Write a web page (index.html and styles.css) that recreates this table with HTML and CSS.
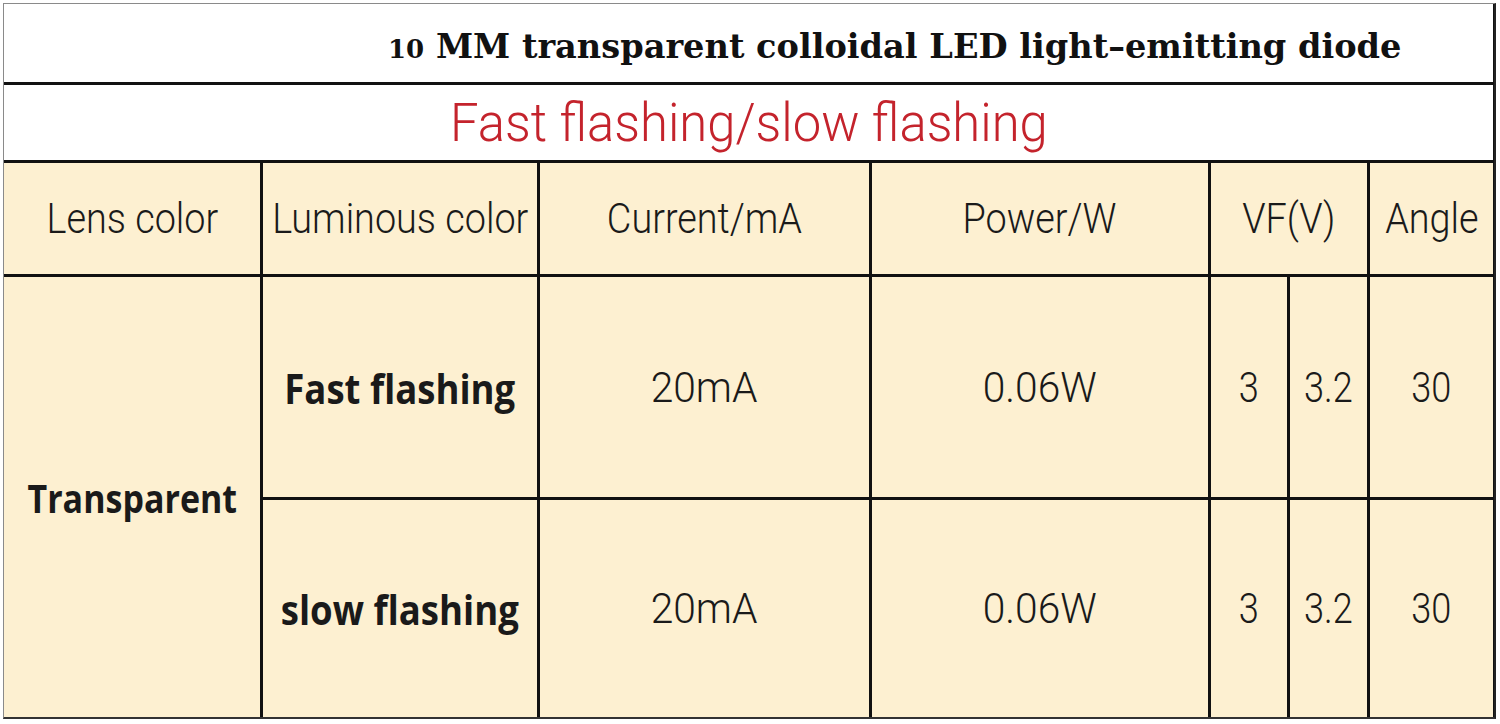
FILE: index.html
```html
<!DOCTYPE html>
<html lang="en">
<head>
  <meta charset="UTF-8">
  <title>10MM LED</title>
  <link rel="stylesheet" href="styles.css">
</head>
<body>
  <div class="sheet">
    <div class="title"><span><span class="num">10</span> MM transparent colloidal LED light–emitting diode</span></div>
    <div class="subtitle"><span class="squeeze">Fast flashing/slow flashing</span></div>

    <!-- header -->
    <div class="cell head"><span class="squeeze">Lens color</span></div>
    <div class="cell head"><span class="squeeze">Luminous color</span></div>
    <div class="cell head"><span class="squeeze">Current/mA</span></div>
    <div class="cell head"><span class="squeeze">Power/W</span></div>
    <div class="cell head vf"><span class="squeeze">VF(V)</span></div>
    <div class="cell head"><span class="squeeze">Angle</span></div>

    <!-- rows -->
    <div class="cell lens"><span class="squeeze">Transparent</span></div>
    <div class="cell bold"><span class="squeeze">Fast flashing</span></div>
    <div class="cell wide"><span class="squeeze">20mA</span></div>
    <div class="cell wide"><span class="squeeze">0.06W</span></div>
    <div class="cell"><span class="squeeze">3</span></div>
    <div class="cell"><span class="squeeze">3.2</span></div>
    <div class="cell"><span class="squeeze">30</span></div>

    <div class="cell bold"><span class="squeeze">slow flashing</span></div>
    <div class="cell wide"><span class="squeeze">20mA</span></div>
    <div class="cell wide"><span class="squeeze">0.06W</span></div>
    <div class="cell"><span class="squeeze">3</span></div>
    <div class="cell"><span class="squeeze">3.2</span></div>
    <div class="cell"><span class="squeeze">30</span></div>
  </div>
</body>
</html>
```

FILE: styles.css
```css
/* spec sheet table */
body {
  margin: 0;
  padding: 3px;
  background-color: #ffffff;
  font-family: Roboto, "Liberation Sans", sans-serif;
  color: #1a1a1a;
}
.sheet {
  display: grid;
  grid-template-columns: 256px 274px 329px 336px 76px 77px 123px;
  grid-template-rows: 78px 75px 111px 220px 217px;
  gap: 3px;
  width: 1490px;
  background-color: #111;
  border-left: 1px solid #8a8a8a;
  border-top: 1px solid #8a8a8a;
  border-right: 2px solid #222;
  border-bottom: 2px solid #333;
}
.title {
  grid-column: 1 / -1;
  background-color: #fff;
  display: flex;
  align-items: center;
  padding-left: 384px;
  padding-top: 5px;
  font-family: "DejaVu Serif", "Liberation Serif", serif;
  font-weight: bold;
  font-size: 33.6px;
  color: #111;
  white-space: nowrap;
}
.title .num {
  font-size: 26px;
}
.subtitle {
  grid-column: 1 / -1;
  background-color: #fff;
  display: flex;
  align-items: center;
  justify-content: center;
  font-size: 54px;
  font-weight: 300;
  color: #c4232c;
}
.subtitle .squeeze {
  transform: scaleX(0.94);
}
.cell {
  background-color: #fdf0d1;
  display: flex;
  align-items: center;
  justify-content: center;
  font-size: 42px;
  font-weight: 300;
}
.head .squeeze {
  transform: scaleX(0.9);
}
.vf {
  grid-column: span 2;
}
.wide .squeeze {
  transform: scaleX(0.97);
}
.lens {
  grid-row: span 2;
  font-family: "Open Sans", "Noto Sans", sans-serif;
  font-weight: bold;
  font-size: 40px;
}
.lens .squeeze {
  transform: scaleX(0.85);
}
.bold {
  font-family: "Open Sans", "Noto Sans", sans-serif;
  font-weight: bold;
  font-size: 42px;
}
.bold .squeeze {
  transform: scaleX(0.87);
}
.squeeze {
  display: inline-block;
  transform: scaleX(0.86);
  white-space: nowrap;
}
```
